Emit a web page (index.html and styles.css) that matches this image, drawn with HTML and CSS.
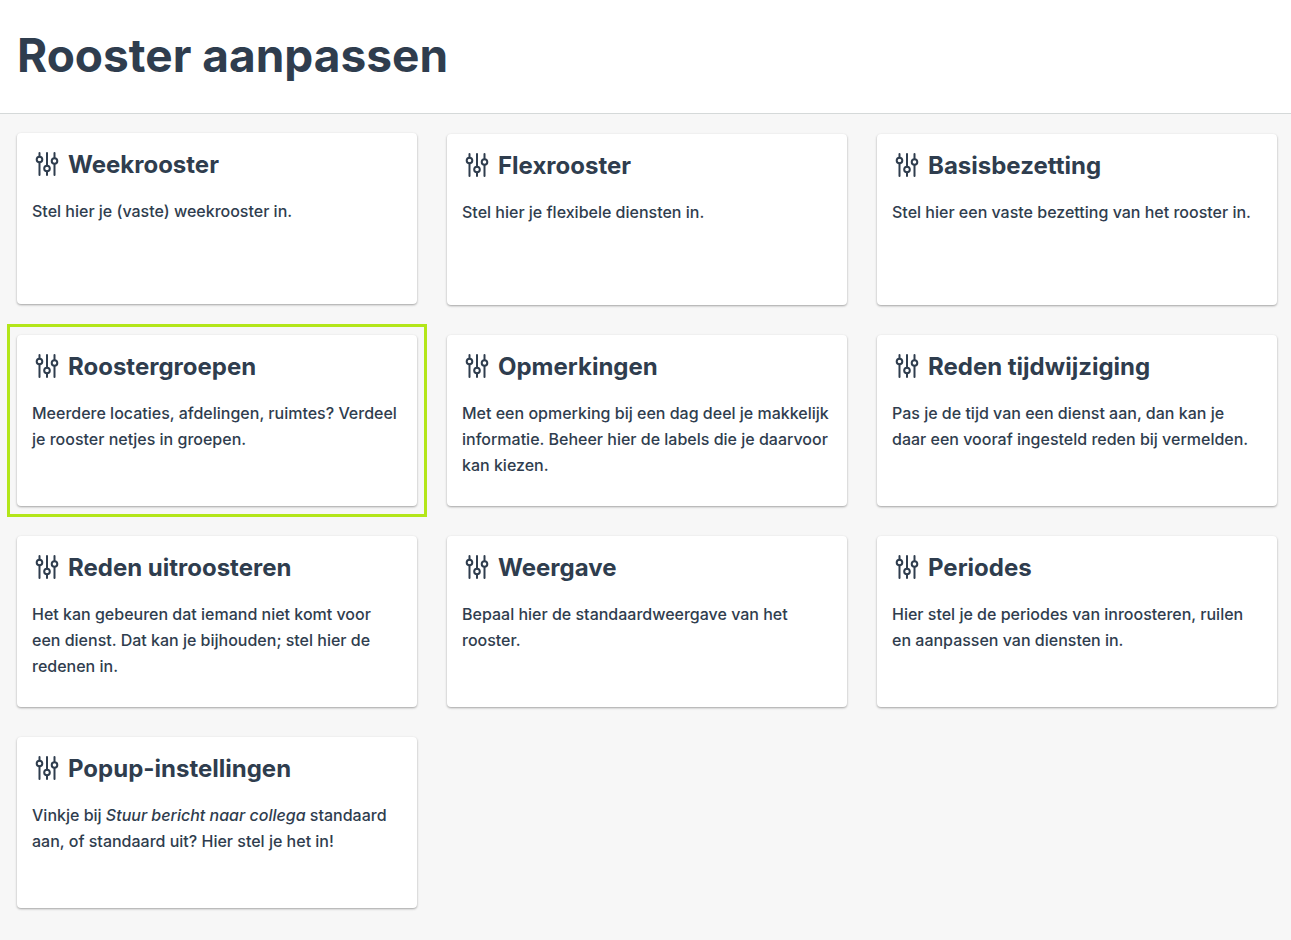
FILE: index.html
```
<!DOCTYPE html>
<html lang="nl">
<head>
    <meta charset="UTF-8">
    <meta name="viewport" content="width=device-width, initial-scale=1.0">
    <title>Rooster aanpassen</title>
    <link rel="stylesheet" href="styles.css">
</head>
<body>
    <svg class="sprite" aria-hidden="true">
        <symbol id="sliders" viewBox="0 0 30 24">
            <path d="M7.5 1v3.5M7.5 10.5V23M15 1v12.5M15 19.5V23M22.5 1v5M22.5 12v11"/>
            <circle cx="7.5" cy="7.5" r="2.8"/>
            <circle cx="15" cy="16.5" r="2.8"/>
            <circle cx="22.5" cy="9" r="2.8"/>
        </symbol>
    </svg>

    <header class="header">
        <h1>Rooster aanpassen</h1>
    </header>

    <main class="kaarten">
        <a href="#weekrooster" class="kaart opgetild">
            <h2><svg class="icoon"><use href="#sliders"/></svg>Weekrooster</h2>
            <p>Stel hier je (vaste) weekrooster in.</p>
        </a>
        <a href="#flexrooster" class="kaart">
            <h2><svg class="icoon"><use href="#sliders"/></svg>Flexrooster</h2>
            <p>Stel hier je flexibele diensten in.</p>
        </a>
        <a href="#basisbezetting" class="kaart">
            <h2><svg class="icoon"><use href="#sliders"/></svg>Basisbezetting</h2>
            <p>Stel hier een vaste bezetting van het rooster in.</p>
        </a>
        <a href="#roostergroepen" class="kaart gemarkeerd">
            <h2><svg class="icoon"><use href="#sliders"/></svg>Roostergroepen</h2>
            <p>Meerdere locaties, afdelingen, ruimtes? Verdeel je rooster netjes in groepen.</p>
        </a>
        <a href="#opmerkingen" class="kaart">
            <h2><svg class="icoon"><use href="#sliders"/></svg>Opmerkingen</h2>
            <p>Met een opmerking bij een dag deel je makkelijk informatie. Beheer hier de labels die je daarvoor kan kiezen.</p>
        </a>
        <a href="#reden-tijdwijziging" class="kaart">
            <h2><svg class="icoon"><use href="#sliders"/></svg>Reden tijdwijziging</h2>
            <p>Pas je de tijd van een dienst aan, dan kan je daar een vooraf ingesteld reden bij vermelden.</p>
        </a>
        <a href="#reden-uitroosteren" class="kaart">
            <h2><svg class="icoon"><use href="#sliders"/></svg>Reden uitroosteren</h2>
            <p>Het kan gebeuren dat iemand niet komt voor een dienst. Dat kan je bijhouden; stel hier de redenen in.</p>
        </a>
        <a href="#weergave" class="kaart">
            <h2><svg class="icoon"><use href="#sliders"/></svg>Weergave</h2>
            <p>Bepaal hier de standaardweergave van het rooster.</p>
        </a>
        <a href="#periodes" class="kaart">
            <h2><svg class="icoon"><use href="#sliders"/></svg>Periodes</h2>
            <p>Hier stel je de periodes van inroosteren, ruilen en aanpassen van diensten in.</p>
        </a>
        <a href="#popup-instellingen" class="kaart">
            <h2><svg class="icoon"><use href="#sliders"/></svg>Popup-instellingen</h2>
            <p>Vinkje bij <em>Stuur bericht naar collega</em> standaard aan, of standaard uit? Hier stel je het in!</p>
        </a>
    </main>
</body>
</html>
```
FILE: styles.css
```
* {
    margin: 0;
    padding: 0;
    box-sizing: border-box;
}

body {
    background-color: #f7f7f7;
    color: #2f3d4e;
    font-family: Inter, "Liberation Sans", sans-serif;
    font-size: 16px;
    font-weight: 500;
    line-height: 26px;
}

.sprite {
    display: none;
}

.header {
    padding: 25px 17px 28px;
    background-color: #fff;
    border-bottom: 1px solid #d5d9d9;
}

h1 {
    font-size: 46px;
    font-weight: 700;
    line-height: 60px;
}

/* Kaarten */

.kaarten {
    display: grid;
    grid-template-columns: repeat(3, 1fr);
    gap: 30px;
    padding: 20px 14px 30px 17px;
}

.kaart {
    position: relative;
    min-height: 171px;
    padding: 15px;
    background-color: #fff;
    border-radius: 4px;
    box-shadow: 0 1px 3px rgba(0, 0, 0, 0.12), 0 1px 2px rgba(0, 0, 0, 0.24);
    color: inherit;
    text-decoration: none;
    transition: transform 0.2s;
}

.kaart:hover,
.opgetild {
    transform: translateY(-1px);
}

/* Kader om de gemarkeerde kaart */
.gemarkeerd::after {
    content: '';
    position: absolute;
    inset: -11px -10px;
    border: 3px solid #b3e619;
    pointer-events: none;
}

h2 {
    display: flex;
    align-items: flex-start;
    gap: 6px;
    margin-bottom: 16px;
    font-size: 24px;
    font-weight: 700;
    line-height: 34px;
}

.icoon {
    width: 30px;
    height: 24px;
    margin-top: 4px;
    fill: none;
    stroke: currentColor;
    stroke-width: 2;
    stroke-linecap: round;
}
```
